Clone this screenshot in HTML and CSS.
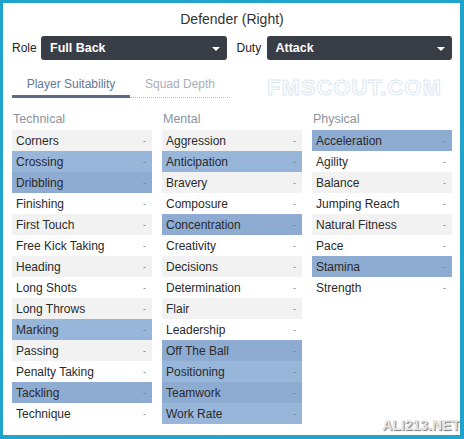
FILE: index.html
```html
<!DOCTYPE html>
<html lang="en">

<head>
    <meta charset="UTF-8">
    <meta name="viewport" content="width=device-width, initial-scale=1.0">
    <title>Defender (Right)</title>
    <link rel="stylesheet" href="styles.css">
</head>

<body>
    <div class="frame">
        <div id="title">Defender (Right)</div>

        <div class="pickers">
            <span class="label">Role</span>
            <div class="select role">Full Back<span class="caret"></span></div>
            <span class="label duty">Duty</span>
            <div class="select">Attack<span class="caret"></span></div>
        </div>

        <div class="tabs">
            <div class="tab active">Player Suitability</div>
            <div class="tab">Squad Depth</div>
        </div>

        <div class="columns">
            <div class="column">
                <div class="heading">Technical</div>
                <div class="row">Corners<span>-</span></div>
                <div class="row key">Crossing<span>-</span></div>
                <div class="row key">Dribbling<span>-</span></div>
                <div class="row">Finishing<span>-</span></div>
                <div class="row">First Touch<span>-</span></div>
                <div class="row">Free Kick Taking<span>-</span></div>
                <div class="row">Heading<span>-</span></div>
                <div class="row">Long Shots<span>-</span></div>
                <div class="row">Long Throws<span>-</span></div>
                <div class="row key">Marking<span>-</span></div>
                <div class="row">Passing<span>-</span></div>
                <div class="row">Penalty Taking<span>-</span></div>
                <div class="row key">Tackling<span>-</span></div>
                <div class="row">Technique<span>-</span></div>
            </div>
            <div class="column">
                <div class="heading">Mental</div>
                <div class="row">Aggression<span>-</span></div>
                <div class="row key">Anticipation<span>-</span></div>
                <div class="row">Bravery<span>-</span></div>
                <div class="row">Composure<span>-</span></div>
                <div class="row key">Concentration<span>-</span></div>
                <div class="row">Creativity<span>-</span></div>
                <div class="row">Decisions<span>-</span></div>
                <div class="row">Determination<span>-</span></div>
                <div class="row">Flair<span>-</span></div>
                <div class="row">Leadership<span>-</span></div>
                <div class="row key">Off The Ball<span>-</span></div>
                <div class="row key">Positioning<span>-</span></div>
                <div class="row key">Teamwork<span>-</span></div>
                <div class="row key">Work Rate<span>-</span></div>
            </div>
            <div class="column">
                <div class="heading">Physical</div>
                <div class="row key">Acceleration<span>-</span></div>
                <div class="row">Agility<span>-</span></div>
                <div class="row">Balance<span>-</span></div>
                <div class="row">Jumping Reach<span>-</span></div>
                <div class="row">Natural Fitness<span>-</span></div>
                <div class="row">Pace<span>-</span></div>
                <div class="row key">Stamina<span>-</span></div>
                <div class="row">Strength<span>-</span></div>
            </div>
        </div>

        <div class="mark fmscout">FMSCOUT.COM</div>
        <div class="mark ali">ALI213.NET</div>
    </div>
</body>

</html>
```

FILE: styles.css
```css
body {
    margin: 0;
    font-family: "Liberation Sans", Arial, sans-serif;
    color: #333;
}

.frame {
    position: relative;
    width: 464px;
    height: 439px;
    box-sizing: border-box;
    border-style: solid;
    border-color: #21a3cc;
    border-width: 3px 4px 4px 3px;
    padding: 0 8px 0 9px;
    background-color: white;
    overflow: hidden;
}

#title {
    padding-top: 5px;
    line-height: 22px;
    text-align: center;
    font-size: 14px;
    color: #333;
}

.pickers {
    display: flex;
    align-items: center;
    margin-top: 6px;
    height: 24px;
    font-size: 12px;
}

.label {
    width: 29px;
    color: #222;
}

.label.duty {
    width: 30px;
    margin-left: 10px;
}

.select {
    flex: 1;
    display: flex;
    align-items: center;
    justify-content: space-between;
    height: 24px;
    padding: 0 7px 0 9px;
    border-radius: 3px;
    background-color: #393d46;
    color: white;
    font-size: 12.5px;
    font-weight: bold;
}

.caret {
    width: 0;
    height: 0;
    border-left: 4px solid transparent;
    border-right: 4px solid transparent;
    border-top: 4px solid white;
    margin-top: 2px;
}

.tabs {
    display: flex;
    margin-top: 14px;
    font-size: 12px;
}

.tab {
    width: 100px;
    line-height: 21px;
    text-align: center;
    color: #a7aeb8;
    border-bottom: 1px dotted #b8bcc2;
    padding-bottom: 2px;
}

.tab.active {
    width: 118px;
    color: #5f7897;
    border-bottom: 3px solid #5a6b84;
    padding-bottom: 0;
}

.columns {
    display: flex;
    align-items: flex-start;
    gap: 10px;
    margin-top: 13px;
}

.column {
    width: 140px;
}

.heading {
    line-height: 16px;
    margin-bottom: 3px;
    padding-left: 1px;
    font-size: 12.5px;
    color: #8c939c;
}

.row {
    display: flex;
    justify-content: space-between;
    align-items: center;
    height: 21px;
    padding: 0 6px 0 4px;
    font-size: 12px;
    color: #2a2a2a;
    background-color: white;
}

.row:nth-child(even) {
    background-color: #f2f2f2;
}

.row.key {
    background-color: #98b5da;
}

.row.key:nth-child(even) {
    background-color: #8eabd1;
}

.row span {
    font-size: 9px;
    color: #6f7a8a;
}

.mark {
    position: absolute;
    font-weight: bold;
    pointer-events: none;
}

.fmscout {
    top: 72px;
    left: 264px;
    font-size: 22px;
    letter-spacing: 1px;
    color: transparent;
    -webkit-text-stroke: 1px #dde7f2;
}

.ali {
    bottom: 2px;
    right: 0;
    font-size: 14px;
    color: #e6e6e6;
    text-shadow: 1px 1px 1px #777;
}
```
